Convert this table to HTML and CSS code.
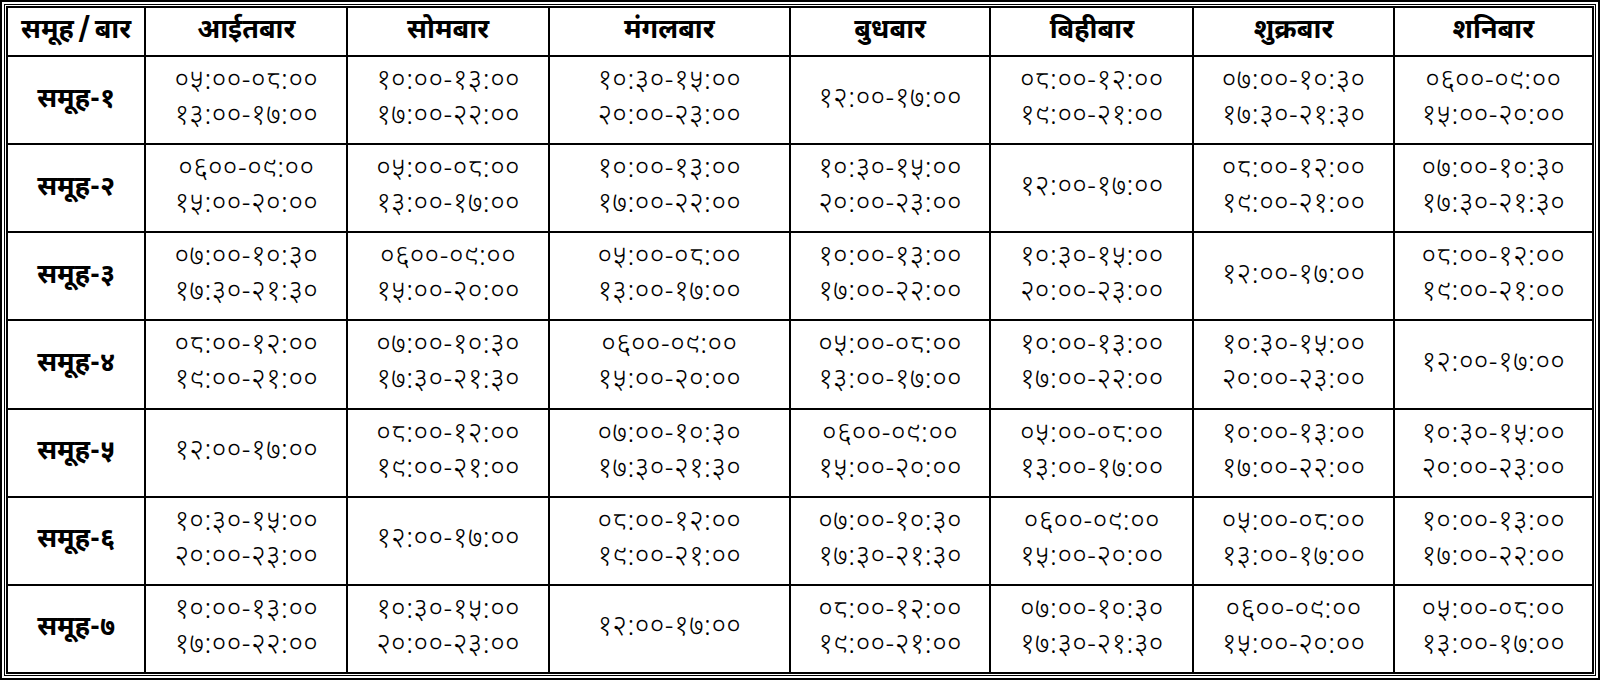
FILE: index.html
```html
<!DOCTYPE html>
<html lang="ne">
<head>
<meta charset="utf-8">
<title>समूह तालिका</title>
<link rel="stylesheet" href="styles.css">
</head>
<body>
<div class="frame">
<div class="inner">
<table class="sched">
<colgroup>
<col class="c0"><col class="c1"><col class="c2"><col class="c3"><col class="c4"><col class="c5"><col class="c6"><col class="c7">
</colgroup>
<thead>
<tr class="head">
<th>समूह<span class="slash">/</span>बार</th><th>आईतबार</th><th>सोमबार</th><th>मंगलबार</th><th>बुधबार</th><th>बिहीबार</th><th>शुक्रबार</th><th>शनिबार</th>
</tr>
</thead>
<tbody>
<tr>
<th>समूह-१</th>
<td>०५:००-०८:००<br>१३:००-१७:००</td>
<td>१०:००-१३:००<br>१७:००-२२:००</td>
<td>१०:३०-१५:००<br>२०:००-२३:००</td>
<td>१२:००-१७:००</td>
<td>०८:००-१२:००<br>१९:००-२१:००</td>
<td>०७:००-१०:३०<br>१७:३०-२१:३०</td>
<td>०६००-०९:००<br>१५:००-२०:००</td>
</tr>
<tr>
<th>समूह-२</th>
<td>०६००-०९:००<br>१५:००-२०:००</td>
<td>०५:००-०८:००<br>१३:००-१७:००</td>
<td>१०:००-१३:००<br>१७:००-२२:००</td>
<td>१०:३०-१५:००<br>२०:००-२३:००</td>
<td>१२:००-१७:००</td>
<td>०८:००-१२:००<br>१९:००-२१:००</td>
<td>०७:००-१०:३०<br>१७:३०-२१:३०</td>
</tr>
<tr>
<th>समूह-३</th>
<td>०७:००-१०:३०<br>१७:३०-२१:३०</td>
<td>०६००-०९:००<br>१५:००-२०:००</td>
<td>०५:००-०८:००<br>१३:००-१७:००</td>
<td>१०:००-१३:००<br>१७:००-२२:००</td>
<td>१०:३०-१५:००<br>२०:००-२३:००</td>
<td>१२:००-१७:००</td>
<td>०८:००-१२:००<br>१९:००-२१:००</td>
</tr>
<tr>
<th>समूह-४</th>
<td>०८:००-१२:००<br>१९:००-२१:००</td>
<td>०७:००-१०:३०<br>१७:३०-२१:३०</td>
<td>०६००-०९:००<br>१५:००-२०:००</td>
<td>०५:००-०८:००<br>१३:००-१७:००</td>
<td>१०:००-१३:००<br>१७:००-२२:००</td>
<td>१०:३०-१५:००<br>२०:००-२३:००</td>
<td>१२:००-१७:००</td>
</tr>
<tr>
<th>समूह-५</th>
<td>१२:००-१७:००</td>
<td>०८:००-१२:००<br>१९:००-२१:००</td>
<td>०७:००-१०:३०<br>१७:३०-२१:३०</td>
<td>०६००-०९:००<br>१५:००-२०:००</td>
<td>०५:००-०८:००<br>१३:००-१७:००</td>
<td>१०:००-१३:००<br>१७:००-२२:००</td>
<td>१०:३०-१५:००<br>२०:००-२३:००</td>
</tr>
<tr>
<th>समूह-६</th>
<td>१०:३०-१५:००<br>२०:००-२३:००</td>
<td>१२:००-१७:००</td>
<td>०८:००-१२:००<br>१९:००-२१:००</td>
<td>०७:००-१०:३०<br>१७:३०-२१:३०</td>
<td>०६००-०९:००<br>१५:००-२०:००</td>
<td>०५:००-०८:००<br>१३:००-१७:००</td>
<td>१०:००-१३:००<br>१७:००-२२:००</td>
</tr>
<tr>
<th>समूह-७</th>
<td>१०:००-१३:००<br>१७:००-२२:००</td>
<td>१०:३०-१५:००<br>२०:००-२३:००</td>
<td>१२:००-१७:००</td>
<td>०८:००-१२:००<br>१९:००-२१:००</td>
<td>०७:००-१०:३०<br>१७:३०-२१:३०</td>
<td>०६००-०९:००<br>१५:००-२०:००</td>
<td>०५:००-०८:००<br>१३:००-१७:००</td>
</tr>
</tbody>
</table>
</div>
</div>
</body>
</html>
```

FILE: styles.css
```css
html, body {
  margin: 0;
  padding: 0;
  background: #fff;
}
body {
  font-family: "Noto Sans Devanagari", "Lohit Devanagari", "Mangal", "Noto Sans", sans-serif;
  color: #000;
}
.frame {
  width: 1600px;
  height: 680px;
  box-sizing: border-box;
  border: 2px solid #000;
  padding: 2px;
}
.inner {
  height: 100%;
  box-sizing: border-box;
  border: 1px solid #000;
  padding: 1px;
}
.sched {
  width: 100%;
  height: 100%;
  border-collapse: collapse;
  table-layout: fixed;
  border: 2px solid #000;
}
.c0 { width: 138px; }
.c1 { width: 202px; }
.c2 { width: 201px; }
.c3 { width: 241px; }
.c4 { width: 200px; }
.c5 { width: 203px; }
.c6 { width: 200px; }
.c7 { width: 199px; }
.sched th,
.sched td {
  border: 2px solid #000;
  text-align: center;
  vertical-align: middle;
  padding: 0;
}
.sched td {
  font-size: 28px;
  line-height: 35px;
  font-weight: 300;
  letter-spacing: 0.3px;
}
.sched th {
  font-size: 27px;
  font-weight: 700;
}
.slash {
  margin: 0 4px;
}
.head th {
  height: 47px;
}
.sched tbody tr {
  height: 87.5px;
}
```
